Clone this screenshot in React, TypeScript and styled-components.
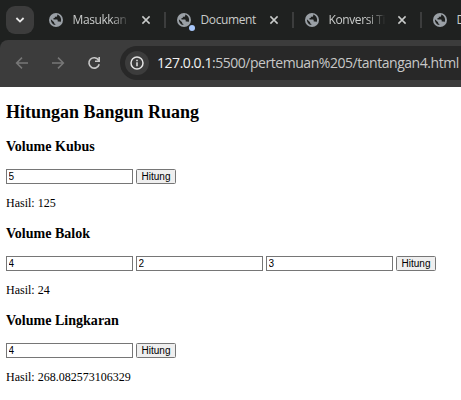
import React from 'react';
import styled, { createGlobalStyle } from 'styled-components';

const GlobalStyle = createGlobalStyle`
  * { box-sizing: border-box; }
  body { margin: 0; background: #fff; overflow: hidden; }
`;

const Window = styled.div`
  width: 461px;
  height: 400px;
  overflow: hidden;
  background: #fff;
`;

const TabStrip = styled.div`
  display: flex;
  height: 40px;
  background: #1f2120;
  overflow: hidden;
`;

const TabSearch = styled.button`
  flex: none;
  display: grid;
  place-items: center;
  width: 28px;
  height: 28px;
  margin: 6px 4px 0 6px;
  padding: 0;
  border: 0;
  border-radius: 9px;
  background: #3c3c3c;
`;

const TabItem = styled.div<{ $divided: boolean }>`
  flex: none;
  display: flex;
  align-items: center;
  width: 128px;
  height: 16px;
  margin-top: 12px;
  padding-left: 11px;
  border-right: 2px solid ${p => (p.$divided ? '#3c3d3d' : 'transparent')};
`;

const Favicon = styled.span`
  position: relative;
  flex: none;
  display: block;
  width: 14px;
  height: 14px;
  svg { display: block; }
`;

const ActivityDot = styled.i`
  position: absolute;
  left: 12px;
  top: 12px;
  width: 6px;
  height: 6px;
  border-radius: 50%;
  background: #a8c7fa;
`;

const TabTitle = styled.span<{ $fade: boolean }>`
  width: 56px;
  margin-left: 9.5px;
  overflow: hidden;
  white-space: nowrap;
  font: 12px/18px 'Segoe UI', 'Open Sans', sans-serif;
  letter-spacing: -0.4px;
  color: #c9cbca;
  ${p => p.$fade && 'mask-image: linear-gradient(90deg, #000 38px, transparent 57px);'}
`;

const CloseIcon = styled.svg`
  flex: none;
  margin-left: 12.5px;
`;

const Toolbar = styled.div`
  background: #1f2120;
  height: 47px;
`;

const ToolbarFace = styled.div`
  display: flex;
  align-items: center;
  height: 47px;
  padding: 0 0 1px 14px;
  border-radius: 8px 0 0 0;
  background: #3c3c3c;
`;

const NavIcon = styled.svg`
  flex: none;
  margin-right: 20px;
`;

const AddressBar = styled.div`
  flex: none;
  display: flex;
  align-items: center;
  width: 380px;
  height: 34px;
  margin-left: -2px;
  padding-left: 5px;
  border-radius: 17px;
  background: #282828;
`;

const SiteInfo = styled.span`
  flex: none;
  display: grid;
  place-items: center;
  width: 24px;
  height: 24px;
  border-radius: 50%;
  background: #3c3c3c;
`;

const Address = styled.span`
  margin-left: 8px;
  white-space: nowrap;
  font: 14px/20px 'Segoe UI', 'Open Sans', sans-serif;
  letter-spacing: -0.46px;
  color: #c7c7c7;
`;

const Host = styled.span`
  color: #f1f1f1;
`;

const Page = styled.main`
  padding: 14px 6px 0;
  font-family: 'Times New Roman', 'Liberation Serif', serif;
  font-size: 12px;
  color: #000;
`;

const PageTitle = styled.h2`
  margin: 0 0 14px;
  font-size: 18px;
  line-height: 22px;
`;

const Calculator = styled.section`
  height: 87px;
`;

const ShapeTitle = styled.h3`
  margin: 0;
  height: 32px;
  font-size: 14.04px;
  line-height: 18px;
`;

const Fields = styled.div`
  display: flex;
  gap: 3px;
`;

const Field = styled.input`
  width: 127px;
  height: 15px;
  margin: 0;
  padding: 0 1.5px;
  border: 1px solid #767676;
  border-radius: 0;
  font: 10px/13px Arial, 'Liberation Sans', sans-serif;
  color: #000;
  background: #fff;
  outline: 0;
`;

const Submit = styled.button`
  width: 40px;
  height: 15px;
  padding: 0;
  border: 1px solid #767676;
  border-radius: 1.5px;
  font: 10px/13px Arial, 'Liberation Sans', sans-serif;
  color: #000;
  background: #efefef;
`;

const Result = styled.p`
  margin: 12px 0 0;
  line-height: 15px;
`;

const Globe = () => (
  <svg width="14" height="14" viewBox="0 0 14 14">
    <circle cx="7" cy="7" r="7" fill="#9aa0a6" />
    <path
      d="M8.2 1.6V2.7C8.2 3.4 7.6 3.8 7 3.8H5.8V5.1H4.5V6.4H7.6C8.4 6.4 8.7 6.9 8.7 7.6V8.4H10.2C10.8 8.4 11.2 8.8 11.3 9.3A5 5 0 0 0 12.1 7C12.1 4.5 10.5 2.3 8.2 1.6ZM1.9 6.2A5.2 5.2 0 0 0 6.3 12.1V11C5.6 11 5.1 10.5 5.1 9.8V9.2Z"
      fill="#1f2120"
    />
  </svg>
);

const tabs = [
  { title: 'Masukkan', fade: true, dot: false, divided: true },
  { title: 'Document', fade: false, dot: true, divided: true },
  { title: 'Konversi Ti', fade: true, dot: false, divided: true },
  { title: 'Document', fade: false, dot: false, divided: false },
];

const shapes = [
  { name: 'Volume Kubus', values: ['5'], result: '125' },
  { name: 'Volume Balok', values: ['4', '2', '3'], result: '24' },
  { name: 'Volume Lingkaran', values: ['4'], result: '268.082573106329' },
];

export default function App() {
  return (
    <Window>
      <GlobalStyle />
      <TabStrip>
        <TabSearch aria-label="Search tabs">
          <svg width="10" height="8" viewBox="0 0 10 8" fill="none" stroke="#e8e8e8" strokeWidth="1.8">
            <path d="M1.4 2L5 5.6L8.6 2" />
          </svg>
        </TabSearch>
        {tabs.map((t, i) => (
          <TabItem key={i} $divided={t.divided}>
            <Favicon>
              <Globe />
              {t.dot && <ActivityDot />}
            </Favicon>
            <TabTitle $fade={t.fade}>{t.title}</TabTitle>
            <CloseIcon width="10" height="10" viewBox="0 0 10 10" stroke="#c9cbca" strokeWidth="1.5">
              <path d="M1.4 1.4L8.6 8.6M8.6 1.4L1.4 8.6" />
            </CloseIcon>
          </TabItem>
        ))}
      </TabStrip>
      <Toolbar>
        <ToolbarFace>
          <NavIcon width="16" height="16" viewBox="0 0 16 16" fill="none" stroke="#777" strokeWidth="1.5">
            <path d="M14 8H3M8 2.6L2.6 8L8 13.4" />
          </NavIcon>
          <NavIcon width="16" height="16" viewBox="0 0 16 16" fill="none" stroke="#777" strokeWidth="1.5">
            <path d="M2 8H13M8 2.6L13.4 8L8 13.4" />
          </NavIcon>
          <NavIcon width="16" height="16" viewBox="0 0 16 16" fill="none" stroke="#c7c7c7" strokeWidth="1.6">
            <path d="M12.6 5.2A5.2 5.2 0 1 0 13.2 9.2M13.2 2V6.2H9" />
          </NavIcon>
          <AddressBar>
            <SiteInfo>
              <svg width="14" height="14" viewBox="0 0 14 14" fill="none" stroke="#e3e3e3" strokeWidth="1.5">
                <circle cx="7" cy="7" r="6" />
                <path d="M7 6.2V10.2M7 3.7V5.2" />
              </svg>
            </SiteInfo>
            <Address>
              <Host>127.0.0.1</Host>:5500/pertemuan%205/tantangan4.html
            </Address>
          </AddressBar>
        </ToolbarFace>
      </Toolbar>
      <Page>
        <PageTitle>Hitungan Bangun Ruang</PageTitle>
        {shapes.map(s => (
          <Calculator key={s.name}>
            <ShapeTitle>{s.name}</ShapeTitle>
            <Fields>
              {s.values.map((v, i) => (
                <Field key={i} defaultValue={v} />
              ))}
              <Submit>Hitung</Submit>
            </Fields>
            <Result>Hasil: {s.result}</Result>
          </Calculator>
        ))}
      </Page>
    </Window>
  );
}
